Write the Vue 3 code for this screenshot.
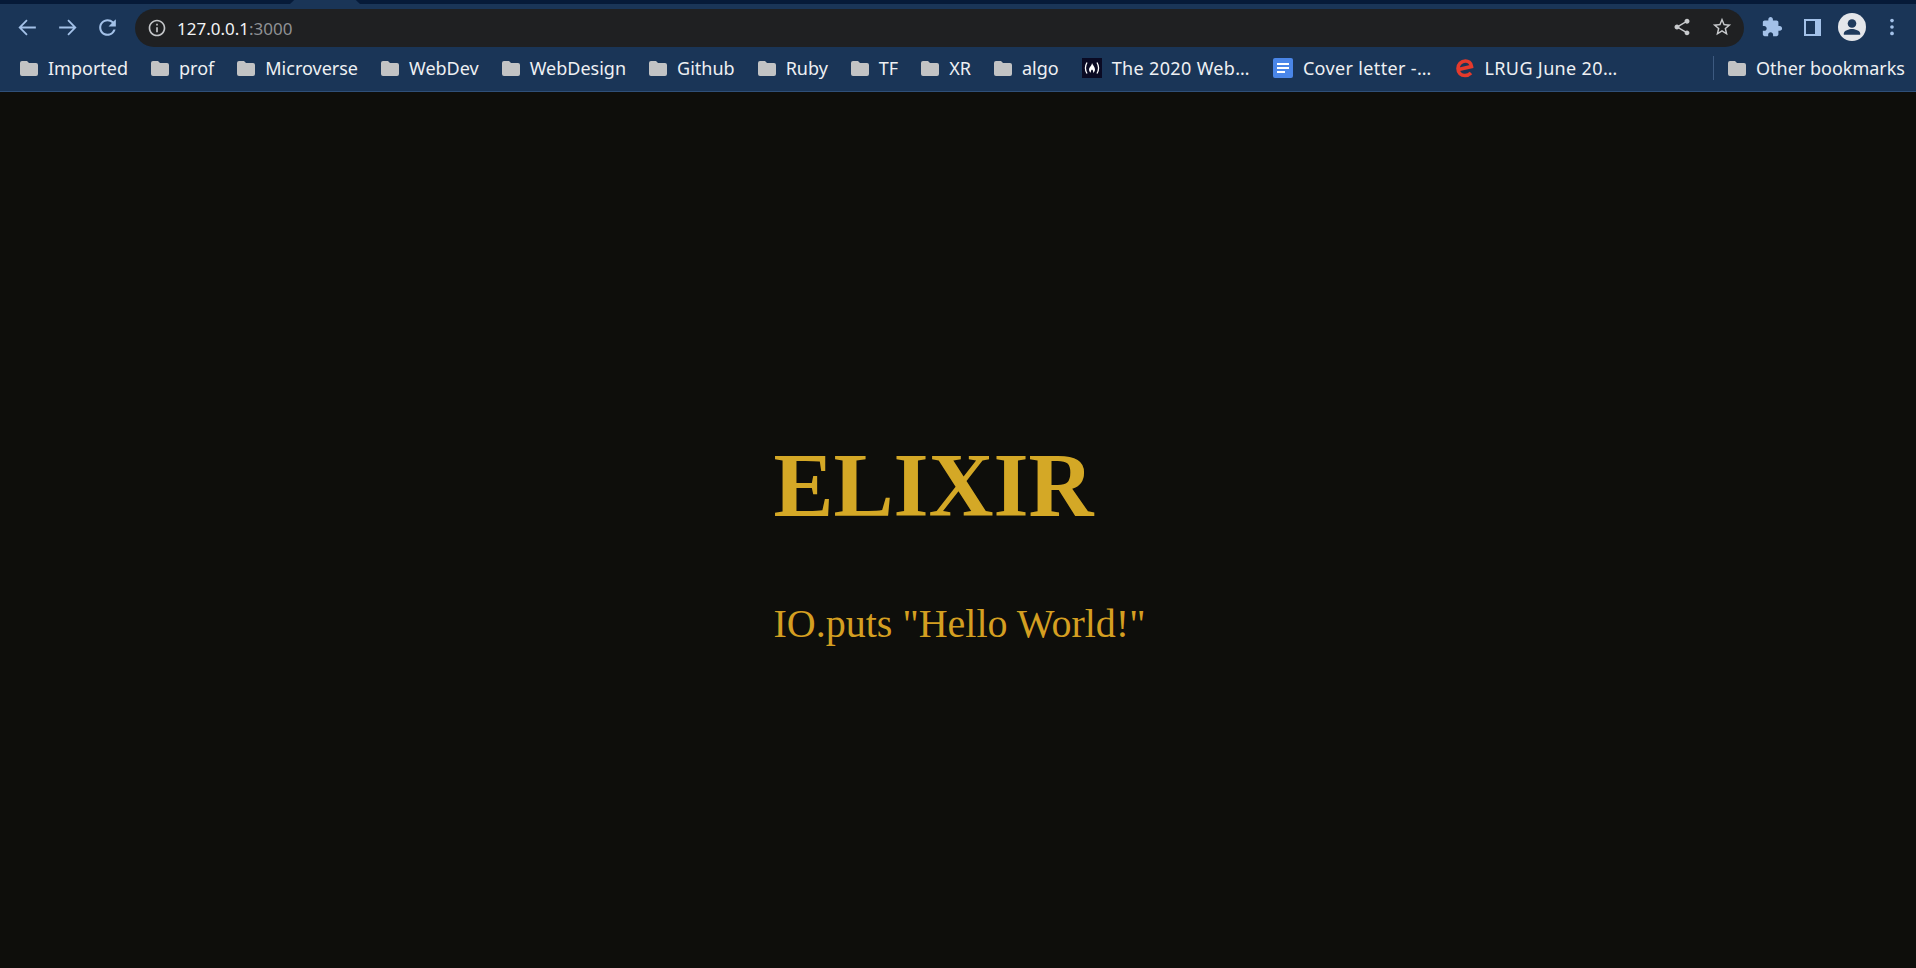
<template>
  <div class="browser">
    <div class="tab-strip">
      <div class="active-tab"></div>
    </div>

    <div class="toolbar">
      <div class="tool-btn">
        <svg viewBox="0 0 24 24" class="nav-icon"><path d="M20 12H4.500M11.500 5l-7 7 7 7" fill="none" /></svg>
      </div>
      <div class="tool-btn">
        <svg viewBox="0 0 24 24" class="nav-icon"><path d="M4 12h15.500M12.500 5l7 7-7 7" fill="none" /></svg>
      </div>
      <div class="tool-btn">
        <svg viewBox="0 0 24 24" class="nav-icon reload"><path d="M17.65 6.35A7.958 7.958 0 0 0 12 4c-4.420 0-7.990 3.580-7.990 8s3.570 8 7.990 8c3.730 0 6.840-2.550 7.730-6h-2.080A5.990 5.990 0 0 1 12 18c-3.310 0-6-2.690-6-6s2.690-6 6-6c1.660 0 3.140.690 4.220 1.780L13 11h7V4l-2.350 2.350z" /></svg>
      </div>

      <div class="omnibox">
        <svg viewBox="0 0 24 24" class="info-icon"><path d="M11 7h2v2h-2zm0 4h2v6h-2zm1-9C6.480 2 2 6.480 2 12s4.480 10 10 10 10-4.480 10-10S17.520 2 12 2zm0 18c-4.410 0-8-3.590-8-8s3.590-8 8-8 8 3.590 8 8-3.590 8-8 8z" /></svg>
        <span class="url">127.0.0.1<span class="port">:3000</span></span>
        <div class="omni-actions">
          <div class="tool-btn">
            <svg viewBox="0 0 24 24" class="omni-icon"><path d="M18 16.080c-.760 0-1.440.300-1.960.770L8.910 12.700c.050-.230.090-.460.090-.700s-.040-.470-.090-.700l7.050-4.110c.540.500 1.250.810 2.040.810 1.660 0 3-1.340 3-3s-1.340-3-3-3-3 1.340-3 3c0 .240.040.470.090.700L8.040 9.810C7.500 9.310 6.790 9 6 9c-1.660 0-3 1.340-3 3s1.340 3 3 3c.790 0 1.500-.310 2.040-.810l7.120 4.160c-.050.210-.080.430-.080.650 0 1.610 1.310 2.920 2.920 2.920s2.920-1.310 2.920-2.920-1.310-2.900-2.920-2.900z" /></svg>
          </div>
          <div class="tool-btn">
            <svg viewBox="0 0 24 24" class="omni-icon star"><path d="M22 9.240l-7.190-.620L12 2 9.190 8.630 2 9.240l5.460 4.730L5.820 21 12 17.270 18.180 21l-1.630-7.030L22 9.240zM12 15.400l-3.760 2.270 1-4.280-3.320-2.880 4.380-.380L12 6.100l1.710 4.040 4.380.380-3.320 2.880 1 4.280L12 15.400z" /></svg>
          </div>
        </div>
      </div>

      <div class="actions">
        <div class="tool-btn">
          <svg viewBox="0 0 24 24" class="solid-icon"><path d="M20.500 11H19V7c0-1.100-.900-2-2-2h-4V3.500C13 2.120 11.880 1 10.500 1S8 2.120 8 3.500V5H4c-1.100 0-1.990.900-1.990 2v3.800H3.500c1.490 0 2.700 1.210 2.700 2.700s-1.210 2.700-2.700 2.700H2V20c0 1.100.900 2 2 2h3.800v-1.500c0-1.490 1.210-2.700 2.700-2.700 1.490 0 2.700 1.210 2.700 2.700V22H17c1.100 0 2-.900 2-2v-4h1.500c1.380 0 2.500-1.120 2.500-2.500S21.880 11 20.500 11z" /></svg>
        </div>
        <div class="tool-btn">
          <svg viewBox="0 0 17 17" class="panel-icon">
            <rect width="17" height="17" fill="#a3c1e8" />
            <rect x="2" y="2" width="9" height="13" fill="#1a3557" />
          </svg>
        </div>
        <div class="tool-btn">
          <svg viewBox="0 0 28 28" class="avatar">
            <circle cx="14" cy="14" r="14" fill="#e4e6ea" />
            <circle cx="14" cy="10.500" r="4.300" fill="#1f3a5c" />
            <path d="M5.800 20.500c0-3 5.400-4.600 8.200-4.600s8.200 1.600 8.200 4.600v1.300H5.800z" fill="#1f3a5c" />
          </svg>
        </div>
        <div class="tool-btn">
          <svg viewBox="0 0 24 24" class="solid-icon"><circle cx="12" cy="5" r="2" /><circle cx="12" cy="12" r="2" /><circle cx="12" cy="19" r="2" /></svg>
        </div>
      </div>
    </div>

    <div class="bookmarks">
      <div v-for="item in bookmarks" :key="item.label" class="bookmark">
        <svg v-if="item.icon === 'folder'" viewBox="0 0 18 16" class="bm-icon folder">
          <path d="M2 1h5l2 2h7a2 2 0 0 1 2 2v9a2 2 0 0 1-2 2H2a2 2 0 0 1-2-2V3a2 2 0 0 1 2-2z" />
        </svg>
        <svg v-else-if="item.icon === 'fcc'" viewBox="0 0 20 20" class="bm-icon fcc">
          <rect width="20" height="20" fill="#0a0a23" />
          <path d="M5 4.500C3 8 3 12 5 15.500M15 4.500c2 3.500 2 7.500 0 11" fill="none" stroke="#fff" stroke-width="1.300" />
          <path d="M10 5c.600 2 3 3.800 3 6.500 0 1.800-1.200 3-2 3.300.500-1.500-.200-2.600-1-3.200-.700.700-1.500 1.700-1 3.200-.800-.300-2-1.500-2-3.200C7 9 9.800 8 10 5z" fill="#fff" />
        </svg>
        <svg v-else-if="item.icon === 'doc'" viewBox="0 0 20 20" class="bm-icon fcc">
          <rect width="20" height="20" rx="2" fill="#4a86e8" />
          <path d="M4 5h12v2H4zm0 4h12v2H4zm0 4h8v2H4z" fill="#fff" />
        </svg>
        <svg v-else viewBox="0 0 20 20" class="bm-icon fcc">
          <path d="M3.500 11.500 L16.500 8.500 C16 4.500 13 3 10.500 3 C6 3 3 6.500 3 10.500 C3 15 6 17.500 10 17.500 C12.500 17.500 14.500 16.500 16 15" fill="none" stroke="#e53a2c" stroke-width="3.600" />
        </svg>
        <span class="bm-label" :class="{ wide: item.icon !== 'folder' }">{{ item.label }}</span>
      </div>
      <div class="bm-sep"></div>
      <div class="bookmark">
        <svg viewBox="0 0 18 16" class="bm-icon folder">
          <path d="M2 1h5l2 2h7a2 2 0 0 1 2 2v9a2 2 0 0 1-2 2H2a2 2 0 0 1-2-2V3a2 2 0 0 1 2-2z" />
        </svg>
        <span class="bm-label">Other bookmarks</span>
      </div>
    </div>

    <main class="page">
      <div class="content">
        <h1 class="title">ELIXIR</h1>
        <p class="code">IO.puts "Hello World!"</p>
      </div>
    </main>
  </div>
</template>

<script setup>
const bookmarks = [
  { label: 'Imported', icon: 'folder' },
  { label: 'prof', icon: 'folder' },
  { label: 'Microverse', icon: 'folder' },
  { label: 'WebDev', icon: 'folder' },
  { label: 'WebDesign', icon: 'folder' },
  { label: 'Github', icon: 'folder' },
  { label: 'Ruby', icon: 'folder' },
  { label: 'TF', icon: 'folder' },
  { label: 'XR', icon: 'folder' },
  { label: 'algo', icon: 'folder' },
  { label: 'The 2020 Web…', icon: 'fcc' },
  { label: 'Cover letter -…', icon: 'doc' },
  { label: 'LRUG June 20…', icon: 'e' }
]
</script>

<style>
html,
body {
  margin: 0;
  background: #0e0e0b;
}
</style>

<style scoped>
.browser {
  height: 100vh;
  display: flex;
  flex-direction: column;
  overflow: hidden;
  font-family: "Noto Sans", "Liberation Sans", sans-serif;
}

.tab-strip {
  height: 4px;
  background: #061a38;
  padding-left: 290px;
}

.active-tab {
  width: 70px;
  height: 4px;
  background: #1a3557;
  clip-path: polygon(6% 0, 94% 0, 100% 100%, 0 100%);
}

.toolbar {
  height: 43px;
  box-sizing: border-box;
  padding: 5px 4px 0 7px;
  display: flex;
  align-items: center;
  background: #1a3557;
}

.tool-btn {
  width: 40px;
  height: 38px;
  box-sizing: border-box;
  padding-bottom: 2px;
  display: flex;
  align-items: center;
  justify-content: center;
  flex-shrink: 0;
}

.nav-icon {
  width: 25px;
  height: 25px;
  stroke: #a3c1e8;
  stroke-width: 1.700;
}

.reload {
  fill: #a3c1e8;
  stroke: none;
}

.solid-icon {
  width: 22px;
  height: 22px;
  fill: #a3c1e8;
}

.panel-icon {
  width: 17px;
  height: 17px;
}

.avatar {
  width: 28px;
  height: 28px;
}

.omnibox {
  flex: 1;
  height: 38px;
  margin: 0 8px;
  padding: 0 2px 0 12px;
  display: flex;
  align-items: center;
  gap: 10px;
  background: #1f2022;
  border-radius: 19px;
}

.info-icon {
  width: 20px;
  height: 20px;
  fill: #c4c6c9;
}

.url {
  font-size: 17px;
  color: #f2f3f5;
}

.port {
  color: #8f9194;
}

.omni-actions {
  margin-left: auto;
  display: flex;
}

.actions {
  display: flex;
}

.omni-icon {
  width: 20px;
  height: 20px;
  fill: #c8cacd;
}

.star {
  width: 22px;
  height: 22px;
}

.bookmarks {
  height: 45px;
  box-sizing: border-box;
  padding: 0 11px 2px 20px;
  display: flex;
  align-items: center;
  gap: 23px;
  background: #1a3557;
  border-bottom: 1px solid #2f4f78;
}

.bookmark {
  display: flex;
  align-items: center;
  gap: 10px;
  flex-shrink: 0;
}

.bm-icon {
  flex-shrink: 0;
}

.folder {
  width: 18px;
  height: 16px;
  fill: #c2c3c4;
}

.fcc {
  width: 20px;
  height: 20px;
}

.bm-label {
  font-size: 18px;
  color: #eef0f3;
  white-space: nowrap;
}

.wide {
  letter-spacing: 0.35px;
}

.bm-sep {
  width: 1px;
  height: 24px;
  margin-left: auto;
  margin-right: -9px;
  background: #3d5a80;
}

.page {
  flex: 1;
  padding: 27px 0 0 3px;
  display: flex;
  align-items: center;
  justify-content: center;
  background: #0e0e0b;
}

.content {
  font-family: "Liberation Serif", "Times New Roman", serif;
}

.title {
  margin: 0 0 70px;
  font-size: 90px;
  line-height: 1;
  font-weight: 700;
  color: #d4a826;
}

.code {
  margin: 0;
  font-size: 40px;
  line-height: 1.150;
  color: #d49f21;
}
</style>
